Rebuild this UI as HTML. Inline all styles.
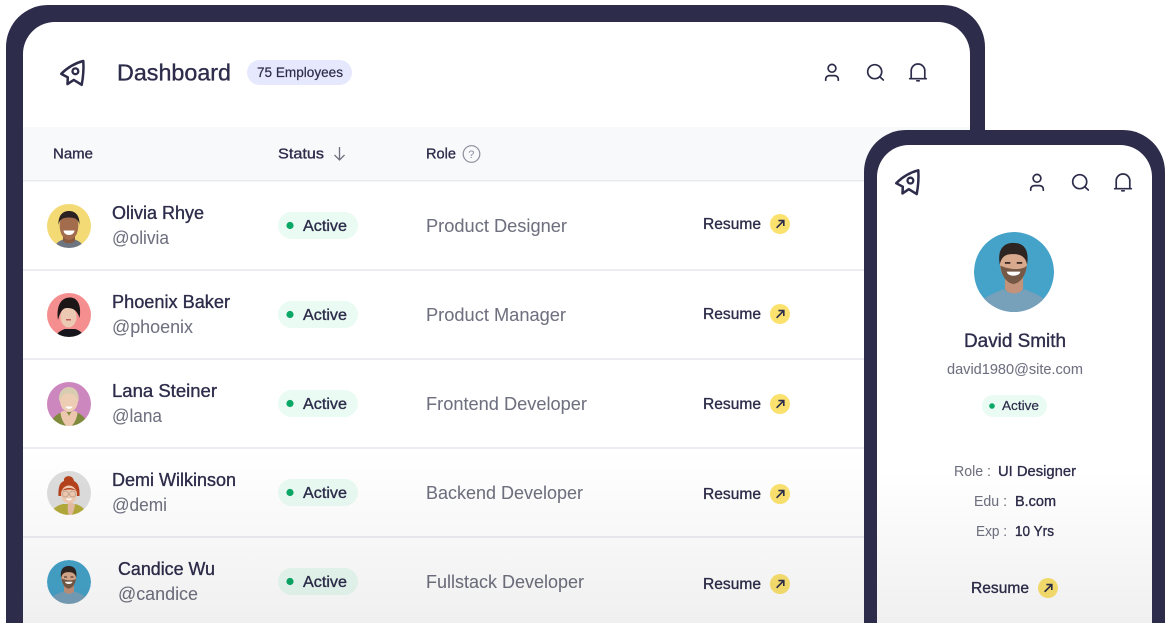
<!DOCTYPE html>
<html><head><meta charset="utf-8"><style>
html,body{margin:0;padding:0;background:#fff;width:1172px;height:623px;overflow:hidden}
svg{display:block}
text{font-family:"Liberation Sans",sans-serif;fill:#2d2c4a;stroke:#2d2c4a;stroke-width:.35px}
text.g{fill:#6f707f;stroke:#6f707f;stroke-width:.05px}
.ic{fill:none;stroke:#2d2c4a;stroke-width:1.7;stroke-linecap:round;stroke-linejoin:round}
</style></head><body>
<svg width="1172" height="623" viewBox="0 0 1172 623" xmlns="http://www.w3.org/2000/svg">
<defs>
<linearGradient id="fade" x1="0" y1="0" x2="0" y2="1"><stop offset="0" stop-color="#000" stop-opacity="0"/><stop offset="1" stop-color="#000" stop-opacity=".06"/></linearGradient>
<filter id="soft" x="-10%" y="-10%" width="120%" height="120%"><feGaussianBlur stdDeviation=".35"/></filter>
<clipPath id="c"><circle cx="0" cy="0" r="22"/></clipPath>
<g id="person"><circle cx="0" cy="-3.700" r="3.900" class="ic"/><path d="M-6.300 8.300V7.200a3.600 3.600 0 0 1 3.600-3.600h5.400a3.600 3.600 0 0 1 3.600 3.600V8.300" class="ic"/></g>
<g id="search"><circle cx="-.3" cy="-.3" r="7" class="ic"/><path d="M4.800 4.800L8.300 8" class="ic"/></g>
<g id="bell"><path d="M-8.300 6.700H8.300M-6.800 6.700V-1.200a6.800 6.800 0 0 1 13.600 0V6.700" class="ic"/><path d="M-1.200 8.800H1.200" class="ic"/></g>
<g id="rocket"><path d="M10.800-11.500C3-9.500-5-5-11.300 1.400L-4.700 4.900L-5 11.600L1.300 7.400L9.200 12.300C10.800 4 11.300-4 10.800-11.500Z" class="ic" style="stroke-width:2.500"/><circle cx="2.900" cy="-1.200" r="2.900" class="ic" style="stroke-width:2.300"/></g>
<g id="go"><circle r="10" fill="#fbe26f"/><path d="M-3.400 3.800L3.400-3M-1.600-3.400H3.800V2" fill="none" stroke="#2d2c4a" stroke-width="1.600"/></g>
<g id="a5"><circle r="22" fill="#45a3c9"/>
<path d="M-22 22C-20 15-12 12-6 9.500C-3 12 3 12 6 9.500C12 12 20 15 22 22Z" fill="#77a0ba"/>
<path d="M-5 2H5V9.500C3 12.500-3 12.500-5 9.500Z" fill="#c3927a"/>
<ellipse cx="-.3" cy="-4.800" rx="7.400" ry="10.800" fill="#d8a98c"/>
<path d="M-7.500-3.500C-7 3-3 6.500-.3 6.500S6.500 3 7-3.500C5-1-2-1-7.500-3.500Z" fill="#5c4334" opacity=".8"/>
<path d="M-4-.2H3.500C3 2.800-3.500 2.800-4-.2Z" fill="#fff"/>
<path d="M-7.800-4C-9.500-13-5-16-.5-16C5-16 8.500-13 7.200-4C6.500-8 4-10-.5-9.800C-5-10-7-8-7.800-4Z" fill="#2e2522"/>
<rect x="-5" y="-5.500" width="3" height="1" fill="#3a2a25"/><rect x="1.500" y="-5.500" width="3" height="1" fill="#3a2a25"/>
</g>
</defs>

<!-- tablet -->
<path d="M6 623V47a42 42 0 0 1 42-42H943a42 42 0 0 1 42 42V623Z" fill="#2d2c4a"/>
<path d="M23 623V54a32 32 0 0 1 32-32H938a32 32 0 0 1 32 32V623Z" fill="#fff"/>
<use href="#rocket" transform="translate(72.500 72.500)"/>
<text x="117" y="80.500" font-size="23.500" textLength="114" lengthAdjust="spacingAndGlyphs">Dashboard</text>
<rect x="247" y="60" width="105" height="25" rx="12.500" fill="#e6e8fd"/>
<text x="257" y="77" font-size="13.500" textLength="86" lengthAdjust="spacingAndGlyphs" style="stroke-width:.2px">75 Employees</text>
<use href="#person" transform="translate(832 72)"/>
<use href="#search" transform="translate(875 72)"/>
<use href="#bell" transform="translate(918 72)"/>

<rect x="23" y="127" width="947" height="53" fill="#f8f9fb"/>
<rect x="23" y="180" width="947" height="1.500" fill="#eaebef"/>
<text x="53" y="158.500" font-size="15" textLength="40" lengthAdjust="spacingAndGlyphs">Name</text>
<text x="278" y="158.500" font-size="15" textLength="46" lengthAdjust="spacingAndGlyphs">Status</text>
<path d="M339.500 147V160M334.500 155L339.500 160L344.500 155" fill="none" stroke="#6f707f" stroke-width="1.300"/>
<text x="426" y="158.500" font-size="15" textLength="30" lengthAdjust="spacingAndGlyphs">Role</text>
<circle cx="471.500" cy="154" r="8.300" fill="none" stroke="#8d8e9c" stroke-width="1.200"/>
<text x="468.300" y="158" font-size="11" class="g" style="fill:#8d8e9c;stroke:none">?</text>

<rect x="23" y="269" width="947" height="2" fill="#ecedf2"/>
<rect x="23" y="358" width="947" height="2" fill="#ecedf2"/>
<rect x="23" y="447" width="947" height="2" fill="#ecedf2"/>
<rect x="23" y="536" width="947" height="2" fill="#ecedf2"/>

<!-- row 1 -->
<g transform="translate(69 226)" clip-path="url(#c)"><g filter="url(#soft)"><circle r="23" fill="#f3da74"/>
<path d="M-15 22C-13 16-8 14-4 13H4C8 14 13 16 15 22Z" fill="#6d7480"/>
<path d="M-6 6H6V15C3 18-3 18-6 15Z" fill="#8a5a40"/>
<ellipse cy="0" rx="9.300" ry="14" fill="#a26c4e"/>
<path d="M-10.500-1C-11-11-6-15 0-15S11-11 10.500-1C9.500-6 7-8.500 0-8.500S-9.500-6-10.500-1Z" fill="#2b2320"/>
<path d="M-5.500 4.500H5.500C5 10.500-5 10.500-5.500 4.500Z" fill="#fff"/></g></g>
<text x="112" y="219" font-size="18" textLength="92" lengthAdjust="spacingAndGlyphs">Olivia Rhye</text>
<text x="112" y="244" font-size="18" class="g" textLength="57" lengthAdjust="spacingAndGlyphs">@olivia</text>
<!-- row 2 -->
<g transform="translate(69 315)" clip-path="url(#c)"><g filter="url(#soft)"><circle r="23" fill="#f58f8f"/>
<path d="M-14 23C-12 17-7 15-4 14H6C10 15 13 17 16 23Z" fill="#15161d"/>
<ellipse cx="-.5" cy="2" rx="8" ry="10.500" fill="#ebc9b2"/>
<path d="M-11 5C-13-9-8-17.500 1-17.500C10-17.500 12.500-7 10.500 3C9-3 5-7.500-2-7C-7-7-9-2-11 5Z" fill="#1a1719"/>
<rect x="-3" y="4" width="5" height="1.500" fill="#c0605a"/></g></g>
<text x="112" y="308" font-size="18" textLength="118" lengthAdjust="spacingAndGlyphs">Phoenix Baker</text>
<text x="112" y="333" font-size="18" class="g" textLength="81" lengthAdjust="spacingAndGlyphs">@phoenix</text>
<!-- row 3 -->
<g transform="translate(69 404)" clip-path="url(#c)"><g filter="url(#soft)"><circle r="23" fill="#cc87bf"/>
<path d="M-19 23C-18 14-12 10-7 8H7C12 10 18 14 19 23Z" fill="#7f8a3e"/>
<ellipse cy="-3.500" rx="9" ry="11.500" fill="#edcdb4"/>
<path d="M-8.500 9C-6 5-2 7 0 12C2 7 6 5 8.500 9C7.500 17 3 23 0 23S-7.500 17-8.500 9Z" fill="#ecc7ae"/>
<path d="M-10-2C-11-13-5-17 0-17S11-13 9.500-2C8-8 5-10.500 0-10.500S-8-8-10-2Z" fill="#d8cdb0"/>
<path d="M-3.500 2.500H3.500C3 5.500-3 5.500-3.500 2.500Z" fill="#fff"/></g></g>
<text x="112" y="397" font-size="18" textLength="105" lengthAdjust="spacingAndGlyphs">Lana Steiner</text>
<text x="112" y="422" font-size="18" class="g" textLength="50" lengthAdjust="spacingAndGlyphs">@lana</text>
<!-- row 4 -->
<g transform="translate(69 493)" clip-path="url(#c)"><g filter="url(#soft)"><circle r="23" fill="#dddddd"/>
<path d="M-19 23C-17 15-11 12-6 11H6C11 12 16 15 19 23Z" fill="#b3aa3a"/>
<path d="M-10.500 3C-11-8-8-11-5-12C-6-18 4-19 5-12C9-10 11-6 10.500 3Z" fill="#b5431f"/>
<ellipse cy="1.500" rx="8" ry="9" fill="#f0cab0"/>
<path d="M-7-2C-4-6 4-6 7.500-2C5-4-4-4-7-2Z" fill="#b5431f"/>
<circle cx="-3.600" cy="1" r="3" fill="none" stroke="#b5a090" stroke-width=".8"/><circle cx="3.600" cy="1" r="3" fill="none" stroke="#b5a090" stroke-width=".8"/>
<path d="M-1 11C1 9 5 10 6 12C5 18 3 23 1 23S-2 15-1 11Z" fill="#e6bda5"/>
<path d="M-3 5.500H3C2.500 8-2.500 8-3 5.500Z" fill="#fff"/></g></g>
<text x="112" y="486" font-size="18" textLength="124" lengthAdjust="spacingAndGlyphs">Demi Wilkinson</text>
<text x="112" y="511" font-size="18" class="g" textLength="55" lengthAdjust="spacingAndGlyphs">@demi</text>
<!-- row 5 -->
<g transform="translate(69 582)" clip-path="url(#c)"><g filter="url(#soft)"><use href="#a5"/></g></g>
<text x="118" y="575" font-size="18" textLength="97" lengthAdjust="spacingAndGlyphs">Candice Wu</text>
<text x="118" y="600" font-size="18" class="g" textLength="80" lengthAdjust="spacingAndGlyphs">@candice</text>

<!-- pills -->
<g><rect x="278" y="212" width="80" height="27" rx="13.500" fill="#e9fbf3"/><circle cx="290" cy="225.500" r="3.600" fill="#0aa866"/><text x="303" y="231" font-size="15.500" textLength="44" lengthAdjust="spacingAndGlyphs">Active</text></g>
<g transform="translate(0 89)"><rect x="278" y="212" width="80" height="27" rx="13.500" fill="#e9fbf3"/><circle cx="290" cy="225.500" r="3.600" fill="#0aa866"/><text x="303" y="231" font-size="15.500" textLength="44" lengthAdjust="spacingAndGlyphs">Active</text></g>
<g transform="translate(0 178)"><rect x="278" y="212" width="80" height="27" rx="13.500" fill="#e9fbf3"/><circle cx="290" cy="225.500" r="3.600" fill="#0aa866"/><text x="303" y="231" font-size="15.500" textLength="44" lengthAdjust="spacingAndGlyphs">Active</text></g>
<g transform="translate(0 267)"><rect x="278" y="212" width="80" height="27" rx="13.500" fill="#e9fbf3"/><circle cx="290" cy="225.500" r="3.600" fill="#0aa866"/><text x="303" y="231" font-size="15.500" textLength="44" lengthAdjust="spacingAndGlyphs">Active</text></g>
<g transform="translate(0 356)"><rect x="278" y="212" width="80" height="27" rx="13.500" fill="#e9fbf3"/><circle cx="290" cy="225.500" r="3.600" fill="#0aa866"/><text x="303" y="231" font-size="15.500" textLength="44" lengthAdjust="spacingAndGlyphs">Active</text></g>

<!-- roles -->
<text x="426" y="232" font-size="18.500" class="g" textLength="141" lengthAdjust="spacingAndGlyphs">Product Designer</text>
<text x="426" y="321" font-size="18.500" class="g" textLength="140" lengthAdjust="spacingAndGlyphs">Product Manager</text>
<text x="426" y="410" font-size="18.500" class="g" textLength="161" lengthAdjust="spacingAndGlyphs">Frontend Developer</text>
<text x="426" y="499" font-size="18.500" class="g" textLength="157" lengthAdjust="spacingAndGlyphs">Backend Developer</text>
<text x="426" y="588" font-size="18.500" class="g" textLength="158" lengthAdjust="spacingAndGlyphs">Fullstack Developer</text>

<!-- resume -->
<text x="703" y="229" font-size="15.500" textLength="58" lengthAdjust="spacingAndGlyphs">Resume</text><use href="#go" transform="translate(780 224)"/>
<text x="703" y="319" font-size="15.500" textLength="58" lengthAdjust="spacingAndGlyphs">Resume</text><use href="#go" transform="translate(780 314)"/>
<text x="703" y="409" font-size="15.500" textLength="58" lengthAdjust="spacingAndGlyphs">Resume</text><use href="#go" transform="translate(780 404)"/>
<text x="703" y="499" font-size="15.500" textLength="58" lengthAdjust="spacingAndGlyphs">Resume</text><use href="#go" transform="translate(780 494)"/>
<text x="703" y="589" font-size="15.500" textLength="58" lengthAdjust="spacingAndGlyphs">Resume</text><use href="#go" transform="translate(780 584)"/>

<rect x="23" y="450" width="947" height="173" fill="url(#fade)"/>

<!-- phone -->
<path d="M864 623V172a42 42 0 0 1 42-42H1123a42 42 0 0 1 42 42V623Z" fill="#2d2c4a"/>
<path d="M877 623V177a32 32 0 0 1 32-32H1120a32 32 0 0 1 32 32V623Z" fill="#fff"/>
<use href="#rocket" transform="translate(907.500 181.800)"/>
<use href="#person" transform="translate(1037 182)"/>
<use href="#search" transform="translate(1080 182)"/>
<use href="#bell" transform="translate(1123 182)"/>
<g transform="translate(1014 272) scale(1.82)"><g clip-path="url(#c)"><use href="#a5"/></g></g>
<text x="964" y="347" font-size="19" textLength="102" lengthAdjust="spacingAndGlyphs">David Smith</text>
<text x="947" y="374" font-size="15" class="g" textLength="136" lengthAdjust="spacingAndGlyphs">david1980@site.com</text>
<rect x="982" y="395" width="65" height="22" rx="11" fill="#e9fbf3"/>
<circle cx="992" cy="406" r="2.800" fill="#0aa866"/>
<text x="1002" y="410" font-size="12.500" textLength="37" lengthAdjust="spacingAndGlyphs" style="stroke-width:.2px">Active</text>
<text x="954" y="476" font-size="15" class="g" textLength="37" lengthAdjust="spacingAndGlyphs">Role :</text>
<text x="998" y="476" font-size="14.500" textLength="78" lengthAdjust="spacingAndGlyphs">UI Designer</text>
<text x="974" y="506" font-size="15" class="g" textLength="33" lengthAdjust="spacingAndGlyphs">Edu :</text>
<text x="1015" y="506" font-size="14.500" textLength="41" lengthAdjust="spacingAndGlyphs">B.com</text>
<text x="976" y="536" font-size="15" class="g" textLength="31" lengthAdjust="spacingAndGlyphs">Exp :</text>
<text x="1015" y="536" font-size="14.500" textLength="39" lengthAdjust="spacingAndGlyphs">10 Yrs</text>
<text x="971" y="593" font-size="16" textLength="58" lengthAdjust="spacingAndGlyphs">Resume</text>
<use href="#go" transform="translate(1048 588)"/>
<rect x="877" y="470" width="275" height="153" fill="url(#fade)"/>
</svg>
</body></html>
